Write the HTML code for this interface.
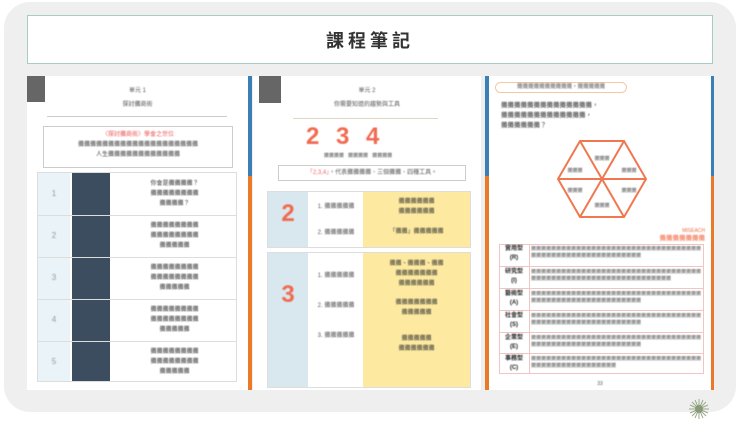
<!DOCTYPE html>
<html><head><meta charset="utf-8"><style>
*{margin:0;padding:0;box-sizing:border-box}
body{width:740px;height:422px;background:#fff;position:relative;overflow:hidden;font-family:"Liberation Sans","Noto Sans CJK TC",sans-serif}
.card{position:absolute;left:4px;top:2px;width:732px;height:410px;background:#efefef;border-radius:26px}
.title{position:absolute;left:27px;top:15px;width:686px;height:49px;background:#fff;border:1px solid #a9cbc5;display:flex;align-items:center;justify-content:center;font-size:18px;letter-spacing:4px;color:#333;font-weight:bold}
.pg{position:absolute;top:76px;height:314px;background:#fff;overflow:hidden}
.b{position:absolute}
.t{position:absolute;font-size:6px;color:#555;filter:blur(.6px);text-align:center;line-height:10px}
.s{position:absolute;background:#3c7fb5}
.o{position:absolute;background:#ea7a2a}
.n{position:absolute;font-size:24px;color:#f06a50;font-weight:bold;filter:blur(.4px)}
.row{position:absolute;left:10px;width:205px;height:21px;border-top:1px solid #f3c4c4}
.row .k{position:absolute;left:0;width:30px;top:1px;font-size:6px;line-height:9px;text-align:center;color:#222;font-weight:bold;filter:blur(.5px)}
.row .v{position:absolute;left:32px;width:170px;top:2px;font-size:5px;line-height:7px;color:#555;filter:blur(.6px);overflow:hidden;height:19px}
</style></head><body>
<div class="card"></div>
<div class="title">課程筆記</div>

<!-- page 1 -->
<div class="pg" style="left:27px;width:221px">
 <div class="b" style="left:0;top:0;width:18px;height:26px;background:#666"></div>
 <div class="t" style="left:0;width:221px;top:10px">單元 1</div>
 <div class="t" style="left:0;width:221px;top:24px">探討攤商術</div>
 <div class="b" style="left:20px;top:40px;width:180px;height:1px;background:#ccc"></div>
 <div class="b" style="left:16px;top:50px;width:190px;height:42px;border:1px solid #ccc"></div>
 <div class="t" style="left:16px;width:190px;top:54px;color:#e55">〈探討攤商術〉學會之世位</div>
 <div class="t" style="left:16px;width:190px;top:64px;color:#444">攤攤攤攤攤攤攤攤攤攤攤攤攤攤攤攤攤攤攤攤</div>
 <div class="t" style="left:16px;width:190px;top:74px;color:#444">人生攤攤攤攤攤攤攤攤攤攤攤攤</div>
 <div class="b" style="left:10px;top:96px;width:200px;height:210px;border:1px solid #ddd"></div>
 <div class="b" style="left:11px;top:97px;width:32px;height:208px;background:#eaf3f7"></div>
 <div class="b" style="left:45px;top:97px;width:38px;height:208px;background:#3b4d5f"></div>
 <div class="b" style="left:11px;top:139px;width:198px;height:1px;background:#ddd"></div>
 <div class="b" style="left:11px;top:181px;width:198px;height:1px;background:#ddd"></div>
 <div class="b" style="left:11px;top:223px;width:198px;height:1px;background:#ddd"></div>
 <div class="b" style="left:11px;top:265px;width:198px;height:1px;background:#ddd"></div>
 <div class="t" style="left:90px;width:115px;top:103px;color:#333">你會是攤攤攤攤？<br>攤攤攤攤攤攤攤攤<br>攤攤攤攤？</div>
 <div class="t" style="left:90px;width:115px;top:145px;color:#333">攤攤攤攤攤攤攤攤<br>攤攤攤攤攤攤攤攤<br>攤攤攤攤攤</div>
 <div class="t" style="left:90px;width:115px;top:187px;color:#333">攤攤攤攤攤攤攤攤<br>攤攤攤攤攤攤攤攤<br>攤攤攤攤攤</div>
 <div class="t" style="left:90px;width:115px;top:229px;color:#333">攤攤攤攤攤攤攤攤<br>攤攤攤攤攤攤攤攤<br>攤攤攤攤攤</div>
 <div class="t" style="left:90px;width:115px;top:271px;color:#333">攤攤攤攤攤攤攤攤<br>攤攤攤攤攤攤攤攤<br>攤攤攤攤攤</div>
 <div class="t" style="left:11px;width:32px;top:113px;color:#999;font-size:8px">1</div>
 <div class="t" style="left:11px;width:32px;top:155px;color:#999;font-size:8px">2</div>
 <div class="t" style="left:11px;width:32px;top:197px;color:#999;font-size:8px">3</div>
 <div class="t" style="left:11px;width:32px;top:239px;color:#999;font-size:8px">4</div>
 <div class="t" style="left:11px;width:32px;top:281px;color:#999;font-size:8px">5</div>
</div>
<div class="s" style="left:248px;top:76px;width:4px;height:100px"></div>
<div class="o" style="left:248px;top:176px;width:4px;height:214px"></div>

<!-- page 2 -->
<div class="pg" style="left:253px;width:228px">
 <div class="b" style="left:6px;top:0;width:22px;height:27px;background:#666"></div>
 <div class="t" style="left:0;width:228px;top:10px">單元 2</div>
 <div class="t" style="left:0;width:228px;top:24px">你需要知道的趨勢與工具</div>
 <div class="b" style="left:40px;top:42px;width:145px;height:1px;background:#ddd8c0"></div>
 <div class="n" style="left:53px;top:47px">2</div>
 <div class="n" style="left:83px;top:47px">3</div>
 <div class="n" style="left:113px;top:47px">4</div>
 <div class="t" style="left:40px;width:130px;top:75px;font-size:5px">攤攤攤攤 &nbsp; 攤攤攤攤 &nbsp; 攤攤攤攤</div>
 <div class="b" style="left:25px;top:89px;width:188px;height:16px;border:1px solid #ccc"></div>
 <div class="t" style="left:25px;width:188px;top:92px"><span style="color:#e66">「2,3,4」</span>，代表攤攤攤攤、三個攤攤、四種工具。</div>
 <div class="b" style="left:14px;top:115px;width:204px;height:57px;border:1px solid #ddd"></div>
 <div class="b" style="left:15px;top:116px;width:40px;height:55px;background:#d9e8ef"></div>
 <div class="b" style="left:110px;top:116px;width:107px;height:55px;background:#fdeaa0"></div>
 <div class="n" style="left:15px;top:124px;width:40px;text-align:center">2</div>
 <div class="t" style="left:56px;width:54px;top:126px">1. 攤攤攤攤攤</div>
 <div class="t" style="left:56px;width:54px;top:152px">2. 攤攤攤攤攤</div>
 <div class="t" style="left:110px;width:107px;top:121px;color:#333">攤攤攤攤攤攤<br>攤攤攤攤攤攤</div>
 <div class="t" style="left:110px;width:107px;top:151px;color:#333">「攤攤」攤攤攤攤攤</div>
 <div class="b" style="left:14px;top:176px;width:204px;height:136px;border:1px solid #ddd"></div>
 <div class="b" style="left:15px;top:177px;width:40px;height:134px;background:#d9e8ef"></div>
 <div class="b" style="left:110px;top:177px;width:107px;height:134px;background:#fdeaa0"></div>
 <div class="n" style="left:15px;top:205px;width:40px;text-align:center">3</div>
 <div class="t" style="left:56px;width:54px;top:195px">1. 攤攤攤攤攤</div>
 <div class="t" style="left:56px;width:54px;top:225px">2. 攤攤攤攤攤</div>
 <div class="t" style="left:56px;width:54px;top:255px">3. 攤攤攤攤攤</div>
 <div class="t" style="left:110px;width:107px;top:183px;color:#333">攤攤、攤攤攤、攤攤<br>攤攤攤攤攤攤攤<br>攤攤攤攤攤攤</div>
 <div class="t" style="left:110px;width:107px;top:222px;color:#333">攤攤攤攤攤攤攤<br>攤攤攤攤攤</div>
 <div class="t" style="left:110px;width:107px;top:258px;color:#333">攤攤攤攤攤<br>攤攤攤攤攤攤</div>
</div>
<div class="s" style="left:485px;top:76px;width:4px;height:100px"></div>
<div class="o" style="left:485px;top:176px;width:4px;height:214px"></div>

<!-- page 3 -->
<div class="pg" style="left:489px;width:222px">
 <div class="b" style="left:6px;top:6px;width:132px;height:11px;border:1px solid #f2c9a5;border-radius:6px"></div>
 <div class="t" style="left:6px;width:132px;top:6px;font-size:5.5px">攤攤攤攤攤攤攤攤攤攤，攤攤攤攤攤</div>
 <div class="t" style="left:12px;top:25px;text-align:left;color:#333;font-size:6.5px;line-height:10px">攤攤攤攤攤攤攤攤攤攤攤攤攤攤，<br>攤攤攤攤攤攤攤攤攤攤攤攤攤，<br>攤攤攤攤攤攤？</div>
 <svg class="b" style="left:0;top:0" width="222" height="314" viewBox="0 0 222 314">
  <g fill="none" stroke="#f07850" stroke-width="2">
   <polygon points="91,65 135,65 157,103 135,141 91,141 69,103"/>
   <line x1="91" y1="65" x2="135" y2="141"/><line x1="135" y1="65" x2="91" y2="141"/><line x1="69" y1="103" x2="157" y2="103"/>
  </g>
 </svg>
 <div class="t" style="left:100px;width:26px;top:80px;font-size:5px;line-height:7px">攤攤攤</div>
 <div class="t" style="left:127px;width:26px;top:92px;font-size:5px;line-height:7px">攤攤攤</div>
 <div class="t" style="left:127px;width:26px;top:112px;font-size:5px;line-height:7px">攤攤攤</div>
 <div class="t" style="left:100px;width:26px;top:127px;font-size:5px;line-height:7px">攤攤攤</div>
 <div class="t" style="left:73px;width:26px;top:112px;font-size:5px;line-height:7px">攤攤攤</div>
 <div class="t" style="left:73px;width:26px;top:92px;font-size:5px;line-height:7px">攤攤攤</div>
 <div class="t" style="left:130px;width:86px;top:152px;text-align:right;color:#f06a40;font-size:5px;line-height:7px">MISEACH<br><span style="font-size:6.5px">攤攤攤攤攤攤攤</span></div>
 <div class="b" style="left:10px;top:168px;width:205px;height:130px;border:1px solid #f3c4c4"></div>
 <div class="b" style="left:40px;top:168px;width:1px;height:130px;background:#f3c4c4"></div>
 <div class="row" style="top:168px;border-top:none"><div class="k">實用型<br>(R)</div><div class="v">攤攤攤攤攤攤攤攤攤攤攤攤攤攤攤攤攤攤攤攤攤攤攤攤攤攤攤攤攤攤攤攤攤攤攤攤攤攤攤攤攤攤攤攤攤攤攤攤攤攤攤攤攤攤攤攤</div></div>
 <div class="row" style="top:190px"><div class="k">研究型<br>(I)</div><div class="v">攤攤攤攤攤攤攤攤攤攤攤攤攤攤攤攤攤攤攤攤攤攤攤攤攤攤攤攤攤攤攤攤攤攤攤攤攤攤攤攤攤攤攤攤攤攤攤攤攤攤攤攤攤攤攤攤攤攤攤攤攤攤</div></div>
 <div class="row" style="top:212px"><div class="k">藝術型<br>(A)</div><div class="v">攤攤攤攤攤攤攤攤攤攤攤攤攤攤攤攤攤攤攤攤攤攤攤攤攤攤攤攤攤攤攤攤攤攤攤攤攤攤攤攤攤攤攤攤攤攤攤攤攤攤攤攤攤攤攤攤</div></div>
 <div class="row" style="top:234px"><div class="k">社會型<br>(S)</div><div class="v">攤攤攤攤攤攤攤攤攤攤攤攤攤攤攤攤攤攤攤攤攤攤攤攤攤攤攤攤攤攤攤攤攤攤攤攤攤攤攤攤攤攤攤攤攤攤攤攤攤攤攤攤攤攤攤攤</div></div>
 <div class="row" style="top:256px"><div class="k">企業型<br>(E)</div><div class="v">攤攤攤攤攤攤攤攤攤攤攤攤攤攤攤攤攤攤攤攤攤攤攤攤攤攤攤攤攤攤攤攤攤攤攤攤攤攤攤攤攤攤攤攤攤攤攤攤攤攤攤攤攤攤攤攤</div></div>
 <div class="row" style="top:277px"><div class="k">事務型<br>(C)</div><div class="v">攤攤攤攤攤攤攤攤攤攤攤攤攤攤攤攤攤攤攤攤攤攤攤攤攤攤攤攤攤攤攤攤攤攤攤攤攤攤攤攤攤攤攤攤攤攤攤攤攤攤攤</div></div>
 <div class="t" style="left:0;width:222px;top:303px;font-size:5px">33</div>
</div>
<div class="s" style="left:711px;top:76px;width:3px;height:100px"></div>
<div class="o" style="left:711px;top:176px;width:3px;height:214px"></div>

<svg style="position:absolute;left:688px;top:398px" width="22" height="22" viewBox="0 0 22 22">
 <g stroke="#9aa88a" stroke-width="1">
  <line x1="11" y1="1" x2="11" y2="21"/><line x1="1" y1="11" x2="21" y2="11"/>
  <line x1="4" y1="4" x2="18" y2="18"/><line x1="18" y1="4" x2="4" y2="18"/>
  <line x1="7" y1="2" x2="15" y2="20"/><line x1="15" y1="2" x2="7" y2="20"/>
  <line x1="2" y1="7" x2="20" y2="15"/><line x1="2" y1="15" x2="20" y2="7"/>
 </g>
 <circle cx="11" cy="11" r="4" fill="#8a9a78"/>
</svg>
</body></html>
